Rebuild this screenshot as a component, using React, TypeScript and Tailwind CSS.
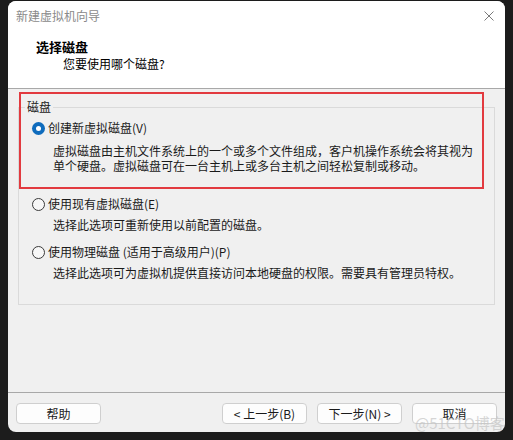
import React from 'react';

const FONT = { fontFamily: '"Noto Sans CJK SC", "Noto Sans", sans-serif' };

function Radio({ checked }: { checked?: boolean }) {
  if (checked) {
    return (
      <span className="flex-none w-[13px] h-[13px] rounded-full bg-[#0f6cbd] flex items-center justify-center">
        <span className="w-[5px] h-[5px] rounded-full bg-white" />
      </span>
    );
  }
  return <span className="flex-none w-[13px] h-[13px] rounded-full border border-[#3a3a3a] bg-[#f7f7f7]" />;
}

function Btn({ children }: { children: React.ReactNode }) {
  return (
    <button className="w-[85px] h-[21px] rounded-[4px] border border-[#cfcfcf] bg-[#fdfdfd] text-[12px] leading-[19px] text-[#1a1a1a]">
      {children}
    </button>
  );
}

export default function App() {
  return (
    <div className="relative w-[513px] h-[440px] overflow-hidden bg-[#1c1c1c] pt-[1px] pl-[8px]" style={FONT}>
      <div className="w-[497px] h-[431px] rounded-[8px] overflow-hidden flex flex-col bg-[#f0f0f0] text-[12px] text-[#1a1a1a]">
        {/* title + header */}
        <div className="h-[88px] flex-none bg-white border-b border-[#a8a8a8]">
          <div className="h-[29px] flex items-center justify-between pl-[8px] pr-[11px]">
            <span className="text-[12px] leading-[16px] text-[#8a8a8a]">新建虚拟机向导</span>
            <svg width="10" height="10" viewBox="0 0 10 10">
              <path d="M0.5 0.5 L9.5 9.5 M9.5 0.5 L0.5 9.5" stroke="#7a7a7a" strokeWidth="1" />
            </svg>
          </div>
          <div className="mt-[9px] pl-[28px] text-[13px] leading-[16px] font-bold text-black">选择磁盘</div>
          <div className="mt-[1px] pl-[55px] text-[12px] leading-[16px] text-black">您要使用哪个磁盘?</div>
        </div>

        {/* body */}
        <div className="flex-1 px-[10px]">
          <fieldset className="mt-[10px] border border-[#dadada] p-0 m-0 h-[206px]">
            <legend className="ml-[6px] px-[2px] text-[12px] leading-[16px]">磁盘</legend>
            <div className="pl-[13px] pt-[5px]">
              <div className="flex items-center gap-[3px] h-[16px]">
                <Radio checked />
                <span className="leading-[16px]">创建新虚拟磁盘(V)</span>
              </div>
              <div className="mt-[7px] pl-[21px] leading-[15px]">
                <div>虚拟磁盘由主机文件系统上的一个或多个文件组成，客户机操作系统会将其视为</div>
                <div>单个硬盘。虚拟磁盘可在一台主机上或多台主机之间轻松复制或移动。</div>
              </div>

              <div className="mt-[23px] flex items-center gap-[3px] h-[16px]">
                <Radio />
                <span className="leading-[16px]">使用现有虚拟磁盘(E)</span>
              </div>
              <div className="mt-[5px] pl-[21px] leading-[15px]">选择此选项可重新使用以前配置的磁盘。</div>

              <div className="mt-[12px] flex items-center gap-[3px] h-[16px]">
                <Radio />
                <span className="leading-[16px]">使用物理磁盘 (适用于高级用户)(P)</span>
              </div>
              <div className="mt-[5px] pl-[21px] leading-[15px]">选择此选项可为虚拟机提供直接访问本地硬盘的权限。需要具有管理员特权。</div>
            </div>
          </fieldset>
        </div>

        {/* footer */}
        <div className="h-[40px] flex-none border-t border-[#a8a8a8] pt-[10px] px-[8px] flex items-start">
          <Btn>帮助</Btn>
          <div className="ml-auto flex gap-[10px]">
            <Btn>&lt; 上一步(B)</Btn>
            <Btn>下一步(N) &gt;</Btn>
            <Btn>取消</Btn>
          </div>
        </div>
      </div>

      {/* annotation */}
      <div className="absolute left-[19px] top-[92px] w-[465px] h-[97px] border-2 border-[#e23a3f]" />
      {/* watermark */}
      <div className="absolute left-[415px] top-[413px] text-[15px] leading-[20px] text-[#c4c4c4]/70 whitespace-nowrap">@51CTO博客</div>
    </div>
  );
}
